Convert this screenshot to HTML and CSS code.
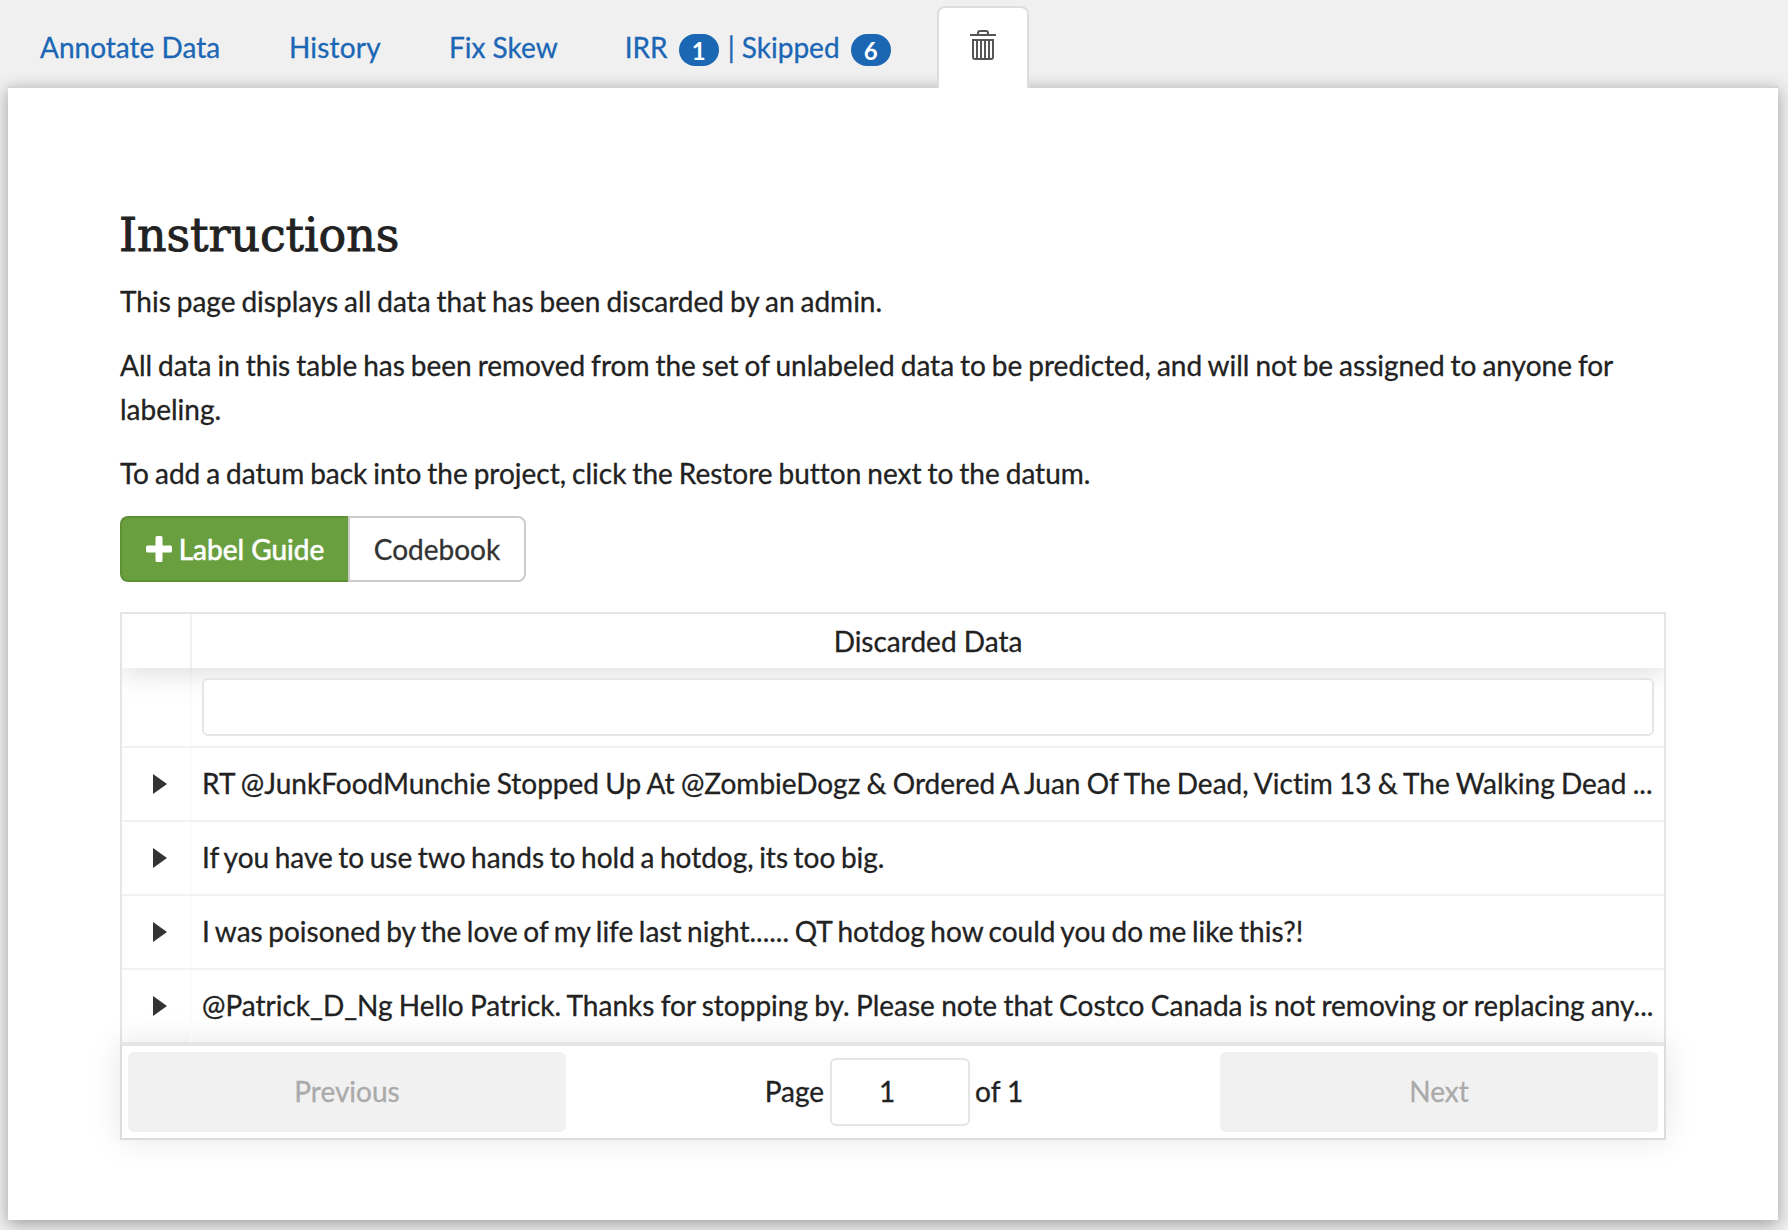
FILE: index.html
```html
<!DOCTYPE html>
<html lang="en">
<head>
<meta charset="utf-8">
<title>Discarded Data</title>
<link rel="stylesheet" href="styles.css">
</head>
<body>
<nav class="tabs">
  <a class="tab tab-annotate">Annotate Data</a>
  <a class="tab tab-history">History</a>
  <a class="tab">Fix Skew</a>
  <a class="tab tab-irr"><span class="irr">IRR</span><span class="badge">1</span><span class="skipped">| Skipped</span><span class="badge">6</span></a>
  <a class="tab active">
    <svg class="trash" viewBox="0 0 26 30" fill="none" stroke="#555" stroke-width="2">
      <path d="M0 5H26M8 5V3Q8 1 10 1H16Q18 1 18 3V5"/>
      <path d="M3 10V27Q3 29 5 29H21Q23 29 23 27V10Z"/>
      <path d="M7 10V28M11 10V28M15 10V28M19 10V28"/>
    </svg>
  </a>
</nav>
<main class="panel">
  <h1>Instructions</h1>
  <p>This page displays all data that has been discarded by an admin.</p>
  <p>All data in this table has been removed from the set of unlabeled data to be predicted, and will not be assigned to anyone for<br>labeling.</p>
  <p>To add a datum back into the project, click the Restore button next to the datum.</p>
  <div class="buttons">
    <button class="btn guide"><svg class="plus" viewBox="0 0 26 26"><path fill="#fff" d="M11 0h4q1.500 0 1.500 1.500V9.500H24.500Q26 9.500 26 11v4q0 1.500-1.500 1.500H16.500V24.500Q16.500 26 15 26H11Q9.500 26 9.500 24.500V16.500H1.500Q0 16.500 0 15V11Q0 9.500 1.500 9.500H9.500V1.500Q9.500 0 11 0Z"/></svg><span>Label Guide</span></button>
    <button class="btn codebook">Codebook</button>
  </div>
  <section class="table">
    <div class="row head"><div class="cell expander"></div><div class="cell title">Discarded Data</div></div>
    <div class="row filter"><div class="cell expander"></div><div class="cell"><input class="search" type="text" aria-label="Filter"></div></div>
    <div class="row"><div class="cell expander"><i class="arrow"></i></div><div class="cell"><span class="datum">RT @JunkFoodMunchie Stopped Up At @ZombieDogz &amp; Ordered A Juan Of The Dead, Victim 13 &amp; The Walking Dead ...</span></div></div>
    <div class="row"><div class="cell expander"><i class="arrow"></i></div><div class="cell"><span class="datum tight">If you have to use two hands to hold a hotdog, its too big.</span></div></div>
    <div class="row"><div class="cell expander"><i class="arrow"></i></div><div class="cell"><span class="datum tight">I was poisoned by the love of my life last night...... QT hotdog how could you do me like this?!</span></div></div>
    <div class="row last"><div class="cell expander"><i class="arrow"></i></div><div class="cell"><span class="datum">@Patrick_D_Ng Hello Patrick. Thanks for stopping by. Please note that Costco Canada is not removing or replacing any...</span></div></div>
    <div class="pager">
      <button class="page-btn" disabled>Previous</button>
      <div class="page-info"><span>Page</span><input class="page-input" value="1" aria-label="Page"><span>of 1</span></div>
      <button class="page-btn" disabled>Next</button>
    </div>
  </section>
</main>
</body>
</html>
```
FILE: styles.css
```css
* { box-sizing: border-box; }
body {
  margin: 0;
  height: 1230px;
  overflow: hidden;
  background: #f0f0f0;
  color: #222;
  font: 28px/44px Lato, sans-serif;
  font-variant-ligatures: none;
  -webkit-text-stroke: .3px;
}
button, input { font: inherit; color: inherit; margin: 0; font-variant-ligatures: none; }
.tabs {
  position: relative;
  z-index: 1;
  display: flex;
  height: 88px;
  padding: 6px 0 0 8px;
}
.tab {
  display: flex;
  flex: none;
  height: 82px;
  margin-right: 4px;
  padding: 19px 32px;
  color: #1b66b5;
  white-space: nowrap;
}
.tab-annotate { width: 245px; }
.tab-history { width: 156px; letter-spacing: .2px; }
.tab-irr { width: 340px; margin-left: -1px; }
.irr { width: 54px; flex: none; }
.skipped { width: 132px; flex: none; padding-left: 9px; }
.active {
  margin: 0;
  width: 92px;
  padding: 22px 0;
  justify-content: center;
  border: 2px solid #ddd;
  border-bottom: 0;
  border-radius: 8px 8px 0 0;
  background: #fff;
}
.trash { width: 26px; height: 30px; flex: none; }
.badge {
  flex: none;
  width: 40px;
  height: 32px;
  margin-top: 9px;
  border-radius: 16px;
  background: #1b67b3;
  color: #fff;
  font-size: 24px;
  font-weight: 700;
  line-height: 33px;
  text-align: center;
  -webkit-text-stroke: 0;
}
.panel {
  width: 1770px;
  height: 1134px;
  margin: -2px 0 0 8px;
  padding: 114px 112px 0;
  border-top: 2px solid #d4d4d4;
  background: #fff;
  box-shadow: 0 4px 16px rgba(0, 0, 0, .35);
}
h1 {
  height: 66px;
  margin: 0 0 11px -1px;
  font: 400 46px/66px "Roboto Slab", "DejaVu Serif", serif;
  letter-spacing: -.1px;
  -webkit-text-stroke: .9px;
}
p { margin: 0 0 20px; white-space: nowrap; word-spacing: -1.2px; }
.buttons { display: flex; margin-top: 21px; }
.btn {
  display: flex;
  align-items: center;
  justify-content: center;
  height: 66px;
  padding: 0;
  border: 2px solid #ccc;
  background: #fff;
  color: #333;
}
.guide {
  width: 228px;
  gap: 7px;
  border-color: #5e9036;
  border-right: 0;
  border-radius: 8px 0 0 8px;
  background: #6a9f3f;
  color: #fff;
  -webkit-text-stroke: .6px;
}
.plus { width: 26px; height: 26px; }
.codebook { width: 178px; border-radius: 0 8px 8px 0; }
.table { margin-top: 30px; border: 2px solid #e5e5e5; border-bottom: 0; }
.row { display: flex; height: 74px; border-bottom: 2px solid #f2f2f2; }
.cell { display: flex; flex: 1; align-items: center; min-width: 0; padding: 0 10px; white-space: nowrap; }
.expander { flex: 0 0 70px; justify-content: center; border-right: 2px solid #fafafa; }
.datum { padding-bottom: 2px; word-spacing: -.9px; }
.tight { word-spacing: -1.6px; }
.head { height: 54px; border: 0; box-shadow: 0 4px 30px rgba(0, 0, 0, .15); clip-path: inset(0 0 -40px 0); }
.head .expander { border-color: #f2f2f2; }
.title { justify-content: center; }
.filter { height: 80px; }
.search { position: relative; width: 100%; height: 58px; border: 2px solid #e5e5e5; border-radius: 6px; background: #fff; }
.arrow { margin-left: 8px; border: solid transparent; border-width: 10px 0 10px 14px; border-left-color: #333; }
.last { border: 0; height: 72px; }
.pager {
  display: flex;
  align-items: center;
  justify-content: space-between;
  height: 98px;
  margin: 0 -2px;
  padding: 0 6px;
  border: 2px solid #dcdcdc;
  border-top: 4px solid #e5e5e5;
  background: #fff;
  box-shadow: 0 0 30px rgba(0, 0, 0, .1);
}
.page-btn { width: 438px; height: 80px; padding: 0 0 2px; border: 0; border-radius: 6px; background: #f1f1f1; color: #aaa; }
.page-info { display: flex; align-items: center; gap: 5px; margin-left: 2px; }
.page-info span { padding-bottom: 2px; }
.page-input { width: 140px; height: 68px; margin-left: 1px; padding: 0 26px 2px 0; border: 2px solid #e5e5e5; border-radius: 6px; text-align: center; }
```
